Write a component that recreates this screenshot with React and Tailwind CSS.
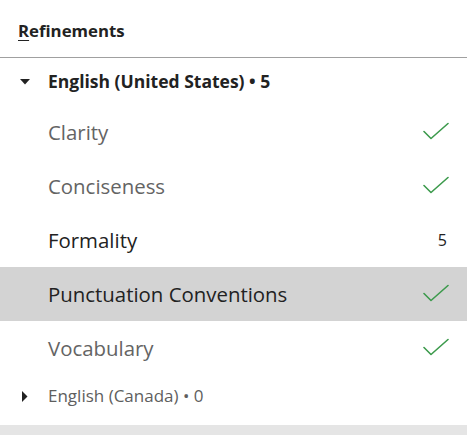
import React from "react";

function Check() {
  return (
    <svg width="26" height="18" viewBox="0 0 26 18" fill="none" className="-mt-[3px]">
      <path d="M1 9.5 L8 16.5 L25 1.5" stroke="#3c9a4c" strokeWidth="1.6" strokeLinecap="round" strokeLinejoin="round" />
    </svg>
  );
}

function Row({ label, dark, right, selected }) {
  return (
    <div className={`flex h-[54px] items-center pl-[48px] pr-[18px] ${selected ? "bg-[#d3d3d3]" : ""}`}>
      <span className={`flex-1 text-[20.4px] ${dark ? "text-[#222222]" : "text-[#646464]"}`}>{label}</span>
      {right === "check" ? <Check /> : <span className="text-[16px] text-[#222222] pr-[2px]">{right}</span>}
    </div>
  );
}

export default function App() {
  return (
    <div className="w-[467px] h-[435px] bg-white overflow-hidden flex flex-col" style={{ fontFamily: '"Open Sans", "Noto Sans", sans-serif' }}>
      <div className="h-[58px] flex items-center px-[18px] border-b border-[#a0a0a0] shrink-0">
        <span className="text-[16.8px] font-bold text-[#222222] mt-[5px]"><span className="underline underline-offset-[3px]">R</span>efinements</span>
      </div>
      <div className="h-[47px] flex items-center shrink-0">
        <div className="w-[48px] flex justify-center pl-[2px]">
          <svg width="10" height="6" viewBox="0 0 10 6"><path d="M0 0 L10 0 L5 5.5 Z" fill="#222" /></svg>
        </div>
        <span className="text-[17.5px] font-bold text-[#222222]">English (United States) • 5</span>
      </div>
      <Row label="Clarity" right="check" />
      <Row label="Conciseness" right="check" />
      <Row label="Formality" dark right="5" />
      <Row label="Punctuation Conventions" dark right="check" selected />
      <Row label="Vocabulary" right="check" />
      <div className="h-[42px] flex items-center shrink-0">
        <div className="w-[48px] flex justify-center pl-[1px]">
          <svg width="6" height="11" viewBox="0 0 6 11"><path d="M0 0 L5.5 5.5 L0 11 Z" fill="#222" /></svg>
        </div>
        <span className="text-[17px] text-[#5e5e5e]">English (Canada) • 0</span>
      </div>
      <div className="h-[8px] shrink-0" />
      <div className="flex-1 bg-[#e5e5e5]" />
    </div>
  );
}
